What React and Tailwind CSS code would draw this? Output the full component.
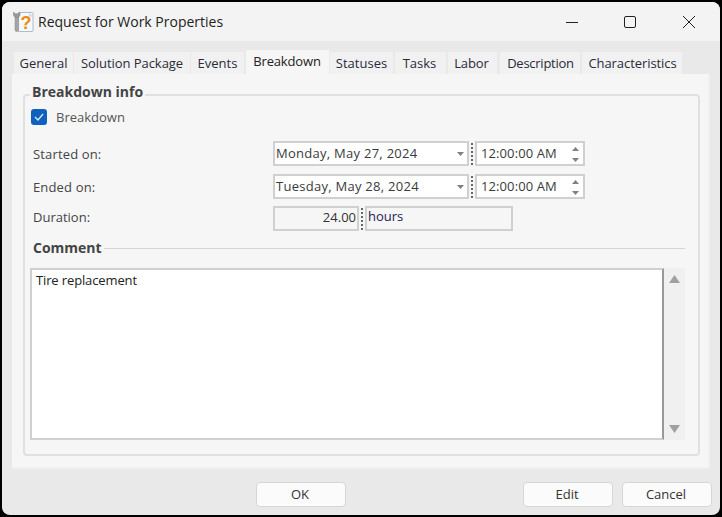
import React from "react";

const font = { fontFamily: '"Open Sans","Noto Sans",sans-serif' };

function AppIcon() {
  return (
    <svg width="22" height="22" viewBox="0 0 22 22" className="shrink-0">
      <rect x="6" y="1.5" width="15" height="19" rx="1" fill="#f6f9fc" stroke="#a9bdd3" />
      <path d="M17 1.5 L21 5.5 L17 5.5 Z" fill="#cfdcea" />
      <path d="M3 5 L3 19 Q3 20.5 4.8 20.5 Q6.6 20.5 6.6 19 L6.6 5 Z" fill="#a4a4a4" stroke="#8a8a8a" strokeWidth="0.5" />
      <path d="M1.5 1 L1.5 4.5 L3.2 6.5 L6.4 6.5 L8 4.5 L8 1 L6.2 2.8 L3.3 2.8 Z" fill="#9a9a9a" stroke="#7c7c7c" strokeWidth="0.5" />
      <text x="14" y="17.5" textAnchor="middle" fontSize="18" fontWeight="700" fill="#ef8a14" fontFamily="Liberation Sans, sans-serif">?</text>
    </svg>
  );
}

function Tab({ label, className }) {
  return (
    <div className={"flex h-[22px] shrink-0 items-center justify-center bg-[#f1f1f1] text-[13px] leading-[18px] text-[#2a2a3a] " + className}>
      {label}
    </div>
  );
}

function Dots() {
  return (
    <div className="flex w-[6px] flex-col items-center justify-center gap-[2px]">
      {[0, 1, 2, 3, 4, 5].map((i) => (
        <span key={i} className="block h-[2px] w-[2px] bg-[#666]" />
      ))}
    </div>
  );
}

function DateRow({ label, date }) {
  return (
    <div className="flex h-[25px] items-center">
      <div className="w-[241px] pl-[1px] pt-[2px] text-[13px] tracking-[0.15px] text-[#444]">{label}</div>
      <div className="flex h-[25px] w-[196px] items-center border-2 border-[#d0d0d0] bg-white pl-[1px] pr-[3px] text-[13px] tracking-[0.27px] text-[#3a3a3a]">
        <span className="flex-1">{date}</span>
        <svg width="7" height="4" viewBox="0 0 7 4"><path d="M0 0H7L3.5 4Z" fill="#808080" /></svg>
      </div>
      <div className="flex w-[6px] justify-center"><Dots /></div>
      <div className="flex h-[25px] w-[110px] items-center border-2 border-[#d0d0d0] bg-white pl-[4px] pr-[4px] text-[13px] tracking-[0.1px] text-[#3a3a3a]">
        <span className="flex-1">12:00:00 AM</span>
        <div className="flex flex-col gap-[7px] pt-[1px]">
          <svg width="7" height="4" viewBox="0 0 7 4"><path d="M0 4H7L3.5 0Z" fill="#808080" /></svg>
          <svg width="7" height="4" viewBox="0 0 7 4"><path d="M0 0H7L3.5 4Z" fill="#808080" /></svg>
        </div>
      </div>
    </div>
  );
}

function Btn({ label }) {
  return (
    <div className="flex h-[25px] w-[90px] items-center justify-center rounded-[4px] border border-[#d6d6d6] bg-[#fbfbfb] pr-[2px] text-[13px] text-[#333]">
      {label}
    </div>
  );
}

export default function App() {
  return (
    <div className="h-[517px] w-[722px] bg-black p-[2px]" style={font}>
      <div className="flex h-[513px] w-[718px] flex-col overflow-hidden rounded-[8px] bg-[#e9e9e9]">
        {/* title bar */}
        <div className="flex h-[39px] shrink-0 items-center bg-[#f3f3f3] pl-[10px]">
          <AppIcon />
          <div className="ml-[4px] flex-1 text-[14px] text-[#222]">Request for Work Properties</div>
          <div className="flex items-center">
            <svg width="12" height="12" viewBox="0 0 12 12" className="mr-[46px]"><path d="M0 6.5H12" stroke="#222" strokeWidth="1" /></svg>
            <svg width="12" height="12" viewBox="0 0 12 12" className="mr-[47px]"><rect x="0.5" y="0.5" width="11" height="11" rx="1.5" fill="none" stroke="#222" strokeWidth="1" /></svg>
            <svg width="12" height="12" viewBox="0 0 12 12" className="mr-[25px]"><path d="M0 0L12 12M12 0L0 12" stroke="#222" strokeWidth="1" /></svg>
          </div>
        </div>

        {/* tabs */}
        <div className="flex h-[33px] shrink-0 items-end pl-[12px]">
          <Tab label="General" className="w-[59px]" />
          <Tab label="Solution Package" className="ml-[1px] w-[116px] tracking-[-0.05px]" />
          <Tab label="Events" className="ml-[1px] w-[53px]" />
          <div className="relative z-10 -mb-px ml-[2px] flex h-[25px] w-[83px] shrink-0 items-start justify-center bg-[#f6f6f6] pr-[1px] pt-[2px] text-[13px] leading-[18px] tracking-[-0.15px] text-[#222]">
            Breakdown
          </div>
          <Tab label="Statuses" className="ml-[1px] w-[63px]" />
          <Tab label="Tasks" className="ml-[2px] w-[51px] pr-[2px]" />
          <Tab label="Labor" className="ml-[2px] w-[49px] pr-[2px] tracking-[-0.1px]" />
          <Tab label="Description" className="ml-[3px] w-[80px] pl-[1px] tracking-[-0.25px]" />
          <Tab label="Characteristics" className="ml-[2px] w-[100px] pl-[1px] tracking-[-0.07px]" />
        </div>

        {/* panel */}
        <div className="ml-[10px] mr-[10px] h-[395px] shrink-0 border-r-2 border-b-2 border-[#f0f0f0] bg-[#f6f6f6] pl-[11px] pr-[8px] pt-[20px]">
          <div className="relative h-[362px] rounded-[4px] border-2 border-[#e0e0e0] pl-[7px] pr-[13px] pt-[13px]">
            <div className="absolute left-[5px] top-[-13px] bg-[#f6f6f6] px-[2px] text-[14px] font-bold leading-[18px] text-[#444]">Breakdown info</div>

            <div className="flex h-[16px] items-center">
              <div className="-ml-[1px] flex h-[16px] w-[16px] items-center justify-center rounded-[3px] bg-[#0e62bd]">
                <svg width="10" height="8" viewBox="0 0 10 8"><path d="M1 4L4 7L9 1" fill="none" stroke="#dce9f7" strokeWidth="1.3" /></svg>
              </div>
              <span className="ml-[9px] pt-[1px] text-[13px] text-[#555]">Breakdown</span>
            </div>

            <div className="mt-[16px]">
              <DateRow label="Started on:" date="Monday, May 27, 2024" />
              <div className="mt-[8px]"><DateRow label="Ended on:" date="Tuesday, May 28, 2024" /></div>
              <div className="mt-[7px] flex h-[25px] items-center">
                <div className="w-[241px] pb-[1px] pl-[1px] text-[13px] text-[#444]">Duration:</div>
                <div className="flex h-[25px] w-[86px] items-center justify-end border-2 border-[#d0d0d0] pb-[2px] pr-[1px] text-[13px] text-[#333]">24.00</div>
                <Dots />
                <div className="flex h-[25px] w-[148px] items-center border-2 border-[#d0d0d0] pb-[3px] pl-[1px] text-[13px] text-[#222250]">hours</div>
              </div>
            </div>

            <div className="mt-[8px] flex h-[18px] items-center">
              <span className="pb-[1px] pl-[1px] pr-[2px] text-[14px] font-bold text-[#444]">Comment</span>
              <div className="h-[1px] flex-1 bg-[#d6d6d6]" />
            </div>

            <div className="-ml-[2px] mt-[11px] flex h-[172px]">
              <div className="flex-1 border-2 border-[#d0d0d0] border-r-[#999] bg-white pl-[4px] pt-[1px] text-[13px] leading-[18px] tracking-[-0.13px] text-[#222]">Tire replacement</div>
              <div className="flex w-[21px] flex-col items-center justify-between bg-[#f0f0f0] py-[7px]">
                <svg width="11" height="8" viewBox="0 0 11 8"><path d="M0 8H11L5.5 0Z" fill="#a0a0a0" /></svg>
                <svg width="11" height="8" viewBox="0 0 11 8"><path d="M0 0H11L5.5 8Z" fill="#a0a0a0" /></svg>
              </div>
            </div>
          </div>
        </div>

        {/* footer */}
        <div className="flex flex-1 items-start pl-[254px] pr-[8px] pt-[13px]">
          <Btn label="OK" />
          <div className="flex-1" />
          <Btn label="Edit" />
          <div className="ml-[9px]"><Btn label="Cancel" /></div>
        </div>
      </div>
    </div>
  );
}
